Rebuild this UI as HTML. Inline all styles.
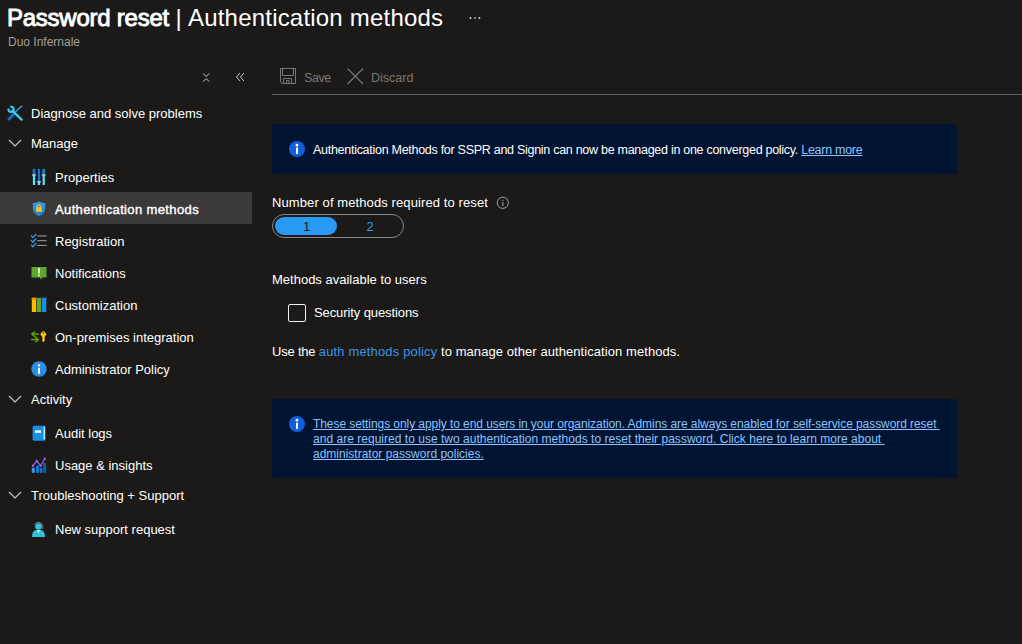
<!DOCTYPE html>
<html><head><meta charset="utf-8">
<style>
*{margin:0;padding:0;box-sizing:border-box}
html,body{width:1022px;height:644px;overflow:hidden;background:#1b1a19;color:#fff;font-family:"Liberation Sans",sans-serif}
.abs{position:absolute;white-space:nowrap}
svg{position:absolute;overflow:visible}
#tb{left:7px;top:3px;font-size:24px;line-height:30px;-webkit-text-stroke:0.9px #fff;letter-spacing:-0.25px}
#tp{left:175.5px;top:3px;font-size:24px;line-height:30px}
#tr{left:188px;top:3px;font-size:24px;line-height:30px;letter-spacing:0.2px}
#sub{left:8px;top:34px;font-size:12px;line-height:16px;color:#a19f9d}
.nav{font-size:13px;line-height:16px;color:#fff}
.sel{position:absolute;left:0;top:192px;width:252px;height:32px;background:#3b3a39}
.tbt{font-size:13px;line-height:16px;color:#797775}
#divider{position:absolute;left:272px;top:94px;width:750px;height:1px;background:#605e5c}
.banner{position:absolute;left:272px;width:685px;background:#011432;border-radius:2px}
.txt{font-size:13px;line-height:16px;color:#fff}
.link{color:#3794ea}
.blink{color:#8ac4ff;text-decoration:underline}
</style></head><body>
<div class="abs" id="tb">Password reset</div>
<div class="abs" id="tp">|</div>
<div class="abs" id="tr">Authentication methods</div>
<svg width="14" height="4" style="left:469px;top:16px"><rect x="0.7" y="1" width="1.6" height="2" fill="#c8c6c4"/><rect x="5" y="1" width="2" height="2" fill="#8a8886"/><rect x="9.6" y="1" width="1.6" height="2" fill="#c8c6c4"/></svg>
<div class="abs" id="sub">Duo Infernale</div>

<!-- sidebar collapse icons -->
<svg width="10" height="10" style="left:201px;top:72px"><path d="M2.2 1.5 L5.2 4.6 L8.2 1.5 M2.2 9.7 L5.2 6.6 L8.2 9.7" stroke="#c8c6c4" stroke-width="1" fill="none"/></svg>
<svg width="10" height="10" style="left:235px;top:72px"><path d="M5 1 L1.5 5 L5 9 M9 1 L5.5 5 L9 9" stroke="#c8c6c4" stroke-width="1" fill="none"/></svg>

<div class="sel"></div>
<!-- wrench -->
<svg width="20" height="20" style="left:4px;top:102px" viewBox="0 0 20 20">
<path d="M10.2 11.8 L5 17" stroke="#0a6fc8" stroke-width="3" stroke-linecap="round"/>
<path d="M17.8 4 L11.2 10" stroke="#2aa8dc" stroke-width="1.4" stroke-linecap="round"/>
<path d="M4.4 7.3 A2.6 2.6 0 1 0 7 4.7" stroke="#3ccaf0" stroke-width="2.1" fill="none" stroke-linecap="round"/>
<path d="M8.6 8.9 L17.6 17.6" stroke="#3ccaf0" stroke-width="2.4" stroke-linecap="round"/>
</svg>
<div class="abs nav" id="n0" style="left:31px;top:106px">Diagnose and solve problems</div>
<svg width="14" height="8" style="left:8px;top:139px"><path d="M1 1 L7 7 L13 1" stroke="#c8c6c4" stroke-width="1.2" fill="none"/></svg>
<div class="abs nav" id="n1" style="left:31px;top:136px">Manage</div>
<!-- properties -->
<svg width="16" height="18" style="left:31px;top:168px" viewBox="0 0 16 18">
<rect x="1.9" y="1" width="2.2" height="16" fill="#50e6ff"/><rect x="1.9" y="1" width="2.2" height="6" fill="#0a78d4"/>
<rect x="6.9" y="1" width="2.2" height="16" fill="#0a78d4"/><rect x="6.9" y="14" width="2.2" height="3" fill="#50e6ff"/>
<rect x="11.6" y="1" width="2.2" height="16" fill="#50e6ff"/><rect x="11.6" y="1" width="2.2" height="6" fill="#0a78d4"/>
<rect x="1.1" y="6.3" width="3.8" height="1.4" fill="#c8c6c4"/><rect x="6.1" y="13" width="3.8" height="1.4" fill="#c8c6c4"/><rect x="10.8" y="6.3" width="3.8" height="1.4" fill="#c8c6c4"/>
</svg>
<div class="abs nav" id="n2" style="left:55px;top:170px">Properties</div>
<!-- shield -->
<svg width="14" height="16" style="left:32px;top:201px" viewBox="0 0 14 16">
<defs><linearGradient id="sg" x1="0" y1="0" x2="0" y2="1"><stop offset="0" stop-color="#3d9bea"/><stop offset="1" stop-color="#1a7fd6"/></linearGradient></defs>
<path d="M7 0.4 Q9.8 1.9 13.2 1.9 L13.2 8 Q12.8 12.4 7 15.4 Q1.2 12.4 0.8 8 L0.8 1.9 Q4.2 1.9 7 0.4Z" fill="url(#sg)"/>
<rect x="4.1" y="6.2" width="5.8" height="4.6" fill="#f5c518"/>
<path d="M5.3 6.4 L5.3 5 Q7 2.6 8.7 5 L8.7 6.4" stroke="#f5c518" stroke-width="1.2" fill="none"/>
</svg>
<div class="abs nav" id="n3" style="left:55px;top:202px;-webkit-text-stroke:0.4px #fff;letter-spacing:0.37px">Authentication methods</div>
<!-- registration -->
<svg width="17" height="16" style="left:30px;top:233px" viewBox="0 0 17 16">
<path d="M1 2.6 L2.9 4.5 L6.3 0.9 M1 7.2 L2.9 9.1 L6.3 5.5 M1 11.8 L2.9 13.7 L6.3 10.1" stroke="#2e8fe6" stroke-width="1.5" fill="none"/>
<rect x="7.2" y="2.4" width="9.5" height="1.1" fill="#979593"/><rect x="7.2" y="7.1" width="9.5" height="1.1" fill="#979593"/><rect x="7.2" y="11.9" width="9.5" height="1.1" fill="#979593"/>
</svg>
<div class="abs nav" id="n4" style="left:55px;top:234px">Registration</div>
<!-- notifications -->
<svg width="16" height="14" style="left:31px;top:266px" viewBox="0 0 16 14">
<path d="M0.5 1 L15.5 1 L15.5 11.5 L11 11.5 L10 13.5 L8.5 11.5 L0.5 11.5Z" fill="#5ea829"/>
<rect x="7.2" y="2" width="1.6" height="5.5" fill="#fff"/><rect x="7.2" y="8.6" width="1.6" height="1.6" fill="#fff"/>
</svg>
<div class="abs nav" id="n5" style="left:55px;top:266px">Notifications</div>
<!-- customization -->
<svg width="16" height="16" style="left:31px;top:297px" viewBox="0 0 16 16">
<rect x="0.8" y="0.8" width="4.4" height="14.2" fill="#ffb900"/><rect x="0.8" y="0.8" width="4.4" height="2" fill="#ff8c00"/>
<rect x="5.8" y="0.8" width="4.4" height="14.2" fill="#5ea829"/>
<rect x="10.9" y="0.8" width="4.4" height="14.2" fill="#1b8ee8"/><rect x="10.9" y="0.8" width="4.4" height="2" fill="#3a7bd5"/>
</svg>
<div class="abs nav" id="n6" style="left:55px;top:298px">Customization</div>
<!-- on-prem -->
<svg width="18" height="14" style="left:30px;top:330px" viewBox="0 0 18 14">
<path d="M4.8 1.5 L1.9 4.1 L8.4 9.5 L5.5 12.1 M1.9 4.1 H9 M1.1 9.5 H8.4" stroke="#57a300" stroke-width="1.5" fill="none" stroke-linejoin="round"/>
<rect x="10.9" y="1.7" width="5" height="5" rx="1.5" fill="#ffc619" transform="rotate(45 13.4 4.2)"/>
<path d="M12.3 6 H14.6 V11 L13.45 12.3 L12.3 11Z" fill="#ffc619"/>
<circle cx="13.4" cy="3.2" r="0.7" fill="#3a2f00"/>
</svg>
<div class="abs nav" id="n7" style="left:55px;top:330px">On-premises integration</div>
<!-- admin policy -->
<svg width="16" height="16" style="left:30.5px;top:361px" viewBox="0 0 16 16">
<circle cx="8" cy="8" r="7.7" fill="#2a90e4"/><rect x="7" y="6.8" width="2" height="6" fill="#fff"/><ellipse cx="8" cy="4.4" rx="1.3" ry="1.1" fill="#fff"/>
</svg>
<div class="abs nav" id="n8" style="left:55px;top:362px">Administrator Policy</div>
<svg width="14" height="8" style="left:8px;top:395px"><path d="M1 1 L7 7 L13 1" stroke="#c8c6c4" stroke-width="1.2" fill="none"/></svg>
<div class="abs nav" id="n9" style="left:31px;top:392px">Activity</div>
<!-- audit -->
<svg width="14" height="16" style="left:32px;top:425px" viewBox="0 0 14 16">
<rect x="0.6" y="0.8" width="12.8" height="15" rx="1.5" fill="#1b8ee8"/><rect x="11.6" y="1.5" width="1.5" height="13" fill="#c3e3fb"/>
<rect x="3" y="5.4" width="6" height="2.4" fill="#fff"/>
</svg>
<div class="abs nav" id="n10" style="left:55px;top:426px">Audit logs</div>
<!-- usage -->
<svg width="16" height="16" style="left:31px;top:458px" viewBox="0 0 16 16">
<rect x="0.8" y="9.8" width="3" height="5" fill="#3a95e0"/><rect x="5" y="7.6" width="3" height="7.2" fill="#0a78d4"/><rect x="8.8" y="9.8" width="2.6" height="5" fill="#0a78d4"/><rect x="12.1" y="5" width="3" height="9.8" fill="#0a5fa8"/>
<path d="M2 7.7 L5.8 3 L9.6 7.7 L13.8 0.8" stroke="#9b5ff0" stroke-width="1.2" fill="none"/>
<circle cx="2" cy="7.7" r="1.2" fill="#9b5ff0"/><circle cx="5.8" cy="3" r="1.2" fill="#9b5ff0"/><circle cx="9.6" cy="7.7" r="1.2" fill="#9b5ff0"/><circle cx="13.8" cy="0.8" r="1.2" fill="#9b5ff0"/>
</svg>
<div class="abs nav" id="n11" style="left:55px;top:458px">Usage &amp; insights</div>
<svg width="14" height="8" style="left:8px;top:491px"><path d="M1 1 L7 7 L13 1" stroke="#c8c6c4" stroke-width="1.2" fill="none"/></svg>
<div class="abs nav" id="n12" style="left:31px;top:488px">Troubleshooting + Support</div>
<!-- support -->
<svg width="16" height="16" style="left:30px;top:521px" viewBox="0 0 16 16">
<path d="M4.2 3.5 Q8 -0.5 12 3 Q13.3 5 12.8 8" stroke="#8a8886" stroke-width="0.9" fill="none"/>
<circle cx="8.5" cy="5.5" r="3.3" fill="#32bedd"/>
<path d="M2 16 Q2 9.5 6 9 L11 9 Q15 9.5 15 16Z" fill="#32bedd"/>
<path d="M7 9 L10 9 L8.5 12.5Z" fill="#e6f8fd"/>
</svg>
<div class="abs nav" id="n13" style="left:55px;top:522px">New support request</div>

<!-- toolbar -->
<svg width="17" height="17" style="left:280px;top:68px" viewBox="0 0 17 17">
<path d="M0.5 0.5 L15.5 0.5 L15.5 15.5 L2 15.5 L0.5 14Z" stroke="#797775" fill="none"/>
<path d="M2.5 0.5 L2.5 7.5 L13.5 7.5 L13.5 0.5" stroke="#797775" fill="none"/>
<path d="M3.5 15.5 L3.5 10.5 L11.5 10.5 L11.5 15.5 M6.5 15.5 L6.5 12.5 L9 12.5 L9 15.5" stroke="#797775" fill="none"/>
</svg>
<div class="abs tbt" id="t0" style="left:304px;top:70px;font-size:12.5px;letter-spacing:-0.45px">Save</div>
<svg width="17" height="17" style="left:347px;top:68px" viewBox="0 0 17 17"><path d="M0.5 0.5 L16 16 M16 0.5 L0.5 16" stroke="#797775" stroke-width="1.1"/></svg>
<div class="abs tbt" id="t1" style="left:371px;top:70px;font-size:12.5px;letter-spacing:0px">Discard</div>
<div id="divider"></div>

<div class="banner" style="top:124px;height:50px"></div>
<svg width="16" height="16" style="left:289px;top:141px" viewBox="0 0 16 16"><circle cx="8" cy="8" r="8" fill="#1060dc"/><rect x="7" y="6.6" width="2" height="6.4" fill="#fff"/><circle cx="8" cy="4.2" r="1.35" fill="#fff"/></svg>
<div class="abs txt" id="b1" style="left:313px;top:142px;font-size:12.5px;letter-spacing:-0.28px">Authentication Methods for SSPR and Signin can now be managed in one converged policy. <span class="blink">Learn more</span></div>

<div class="abs txt" id="m0" style="left:272px;top:195px;letter-spacing:0.1px">Number of methods required to reset</div>
<svg width="14" height="14" style="left:496px;top:196px" viewBox="0 0 14 14"><circle cx="6.8" cy="6.8" r="5.6" stroke="#a19f9d" fill="none"/><rect x="6.3" y="6" width="1.1" height="4" fill="#a19f9d"/><rect x="6.3" y="3.9" width="1.1" height="1.1" fill="#a19f9d"/></svg>
<div style="position:absolute;left:272px;top:214px;width:132px;height:24px;border:1px solid #8a8886;border-radius:12px"></div>
<div style="position:absolute;left:275px;top:217px;width:62px;height:18px;background:#2899f5;border-radius:9px"></div>
<div class="abs txt" style="left:303px;top:219px;color:#1b1a19">1</div>
<div class="abs txt" style="left:366.5px;top:219px;color:#2899f5">2</div>

<div class="abs txt" id="m1" style="left:272px;top:272px">Methods available to users</div>
<div style="position:absolute;left:288px;top:304px;width:18px;height:18px;border:1px solid #f3f2f1;border-radius:2px"></div>
<div class="abs txt" id="m2" style="left:314px;top:305px;letter-spacing:-0.1px">Security questions</div>
<div class="abs txt" id="m3" style="left:272px;top:344px"><span style="letter-spacing:-0.2px">Use the </span><span class="link" style="letter-spacing:0.15px">auth methods policy</span><span style="letter-spacing:0.07px"> to manage other authentication methods.</span></div>

<div class="banner" style="top:399px;height:79px"></div>
<svg width="16" height="16" style="left:289px;top:416px" viewBox="0 0 16 16"><circle cx="8" cy="8" r="8" fill="#1060dc"/><rect x="7" y="6.6" width="2" height="6.4" fill="#fff"/><circle cx="8" cy="4.2" r="1.35" fill="#fff"/></svg>
<div class="abs txt blink" id="b2a" style="left:313px;top:417px;font-size:12px;line-height:15px;letter-spacing:-0.07px">These settings only apply to end users in your organization. Admins are always enabled for self-service password reset&nbsp;</div>
<div class="abs txt blink" id="b2b" style="left:313px;top:432px;font-size:12px;line-height:15px;letter-spacing:0.024px">and are required to use two authentication methods to reset their password. Click here to learn more about&nbsp;</div>
<div class="abs txt blink" id="b2c" style="left:313px;top:447px;font-size:12px;line-height:15px">administrator password policies.</div>
</body></html>
